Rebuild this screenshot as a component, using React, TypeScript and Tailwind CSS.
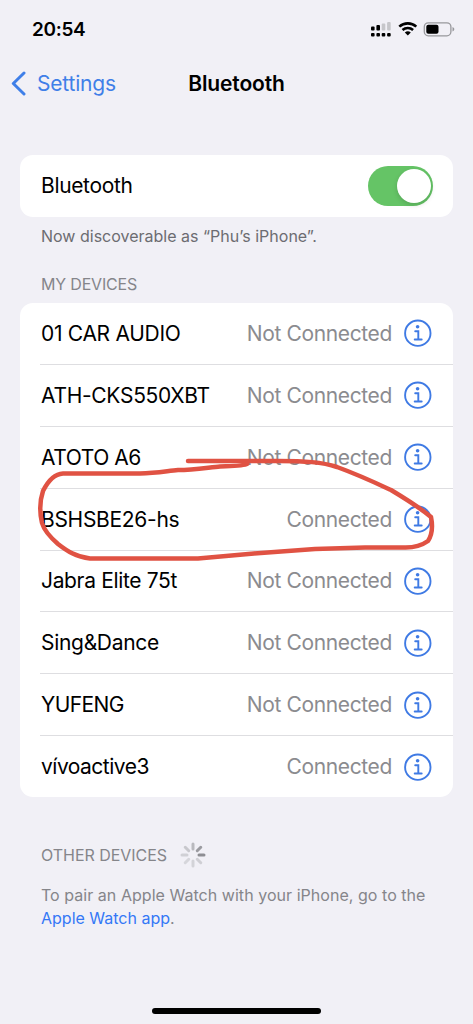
const devices = [
  { name: "01 CAR AUDIO", connected: false, tracking: "tracking-[-0.3px]" },
  { name: "ATH-CKS550XBT", connected: false, tracking: "tracking-[-0.3px]" },
  { name: "ATOTO A6", connected: false, tracking: "tracking-[-0.45px]" },
  { name: "BSHSBE26-hs", connected: true, tracking: "tracking-[-0.3px]" },
  { name: "Jabra Elite 75t", connected: false, tracking: "tracking-[-0.35px]" },
  { name: "Sing&Dance", connected: false, tracking: "tracking-[-0.3px]" },
  { name: "YUFENG", connected: false, tracking: "tracking-[-0.6px]" },
  { name: "vívoactive3", connected: true, tracking: "tracking-[-0.5px]" },
];

const spokes = ["#b9b9be", "#9b9ba0", "#8e8e93", "#cfcfd4", "#d3d3d8", "#d6d6db", "#d0d0d5", "#c8c8cd"];

function StatusIcons() {
  return (
    <svg width="88" height="20" viewBox="0 0 88 20" className="block">
      <g fill="#000">
        <rect x="2" y="6.4" width="3.6" height="4.2" rx="1" />
        <rect x="7.4" y="5" width="3.6" height="5.6" rx="1" />
        <rect x="2" y="13" width="3.6" height="3.6" rx="1" />
        <rect x="7.4" y="13" width="3.6" height="3.6" rx="1" />
        <rect x="12.7" y="13" width="3.6" height="3.6" rx="1" />
        <rect x="18.1" y="13" width="3.6" height="3.6" rx="1" />
      </g>
      <g fill="#c6c6ca">
        <rect x="12.7" y="3.5" width="3.6" height="7.1" rx="1" />
        <rect x="18.1" y="2" width="3.6" height="8.6" rx="1" />
      </g>
      <g fill="none" stroke="#000" strokeWidth="2.6">
        <path d="M30.3 6.6a12.7 12.7 0 0 1 17 0" />
        <path d="M33.5 10a8 8 0 0 1 10.6 0" />
      </g>
      <path d="M35.8 12.6a4.4 4.4 0 0 1 6 0l-3 3z" fill="#000" />
      <rect x="55.3" y="2.8" width="26.6" height="13" rx="4" fill="none" stroke="#98989c" strokeWidth="1.3" />
      <rect x="57.3" y="4.8" width="12.2" height="9" rx="2" fill="#000" />
      <path d="M83.5 7.1c2.4.8 2.4 3.5 0 4.3z" fill="#98989c" />
    </svg>
  );
}

function InfoIcon() {
  return (
    <svg width="28" height="28" viewBox="0 0 28 28" className="ml-3 block shrink-0">
      <circle cx="13.8" cy="14.2" r="12.7" fill="none" stroke="#3f7ae4" strokeWidth="1.9" />
      <circle cx="13.6" cy="7.7" r="1.8" fill="#3f7ae4" />
      <path d="M11.2 12.2h3.1v8M10.7 20.5h7" fill="none" stroke="#3f7ae4" strokeWidth="1.9" strokeLinecap="round" />
    </svg>
  );
}

function Spinner() {
  return (
    <svg width="26" height="26" viewBox="-13 -13 26 26" className="ml-[13px] block">
      {spokes.map((color, i) => (
        <line key={i} x1="0" y1="-6" x2="0" y2="-11" stroke={color} strokeWidth="3" strokeLinecap="round" transform={`rotate(${i * 45})`} />
      ))}
    </svg>
  );
}

export default function App() {
  return (
    <div className="relative flex h-[1024px] w-[473px] flex-col overflow-hidden bg-[#f1f0f6] font-['Inter',sans-serif] text-black">
      <header>
        <div className="flex h-[58px] items-center justify-between pt-px pr-[16px] pl-[32px]">
          <span className="pt-px text-[19px] font-semibold tracking-[-0.35px]">20:54</span>
          <StatusIcons />
        </div>
        <nav className="grid h-[50px] grid-cols-[1fr_auto_1fr] items-center pt-px pl-[11px] text-[21px]">
          <a className="flex items-center text-[#3f7fe8]">
            <svg width="16" height="26" viewBox="0 0 16 26" fill="none" stroke="#3f7fe8" strokeWidth="3" strokeLinecap="round" strokeLinejoin="round">
              <path d="M13 2 2.3 12.5 13 23" />
            </svg>
            <span className="ml-[10px] tracking-[-0.2px]">Settings</span>
          </a>
          <h1 className="mr-[11px] font-semibold tracking-[-0.12px]">Bluetooth</h1>
        </nav>
      </header>

      <main className="px-5 pt-[47px]">
        <section className="flex h-[62px] items-center justify-between rounded-[13px] bg-white pr-5 pl-[21px]">
          <span className="text-[21px] tracking-[-0.35px]">Bluetooth</span>
          <button aria-label="Bluetooth" className="flex h-10 w-[65px] items-center justify-end rounded-full bg-[#65c466] pr-[2.5px]">
            <span className="h-[34px] w-[34px] rounded-full bg-white shadow-[0_2px_5px_rgba(0,0,0,0.15)]" />
          </button>
        </section>
        <p className="mt-[7px] pl-[21px] text-[16px] leading-6 text-[#6c6c71]">Now discoverable as “Phu’s iPhone”.</p>
        <h2 className="mt-6 pl-[21px] text-[16px] leading-6 tracking-[-0.18px] text-[#85858a]">MY DEVICES</h2>

        <section className="mt-[7px] flex h-[494px] flex-col rounded-[13px] bg-white pl-5">
          {devices.map((d, i) => (
            <div key={d.name} className={`flex flex-1 items-center pr-[21px] pl-px text-[21px] ${i ? "border-t border-[#dedee1]" : ""}`}>
              <span className={`pt-[0.5px] ${d.tracking}`}>{d.name}</span>
              <span className="ml-auto pt-[0.5px] tracking-[-0.36px] text-[#8b8b8f]">{d.connected ? "Connected" : "Not Connected"}</span>
              <InfoIcon />
            </div>
          ))}
        </section>

        <div className="mt-[45px] flex h-[26px] items-center pl-[21px] text-[16px] text-[#85858a]">
          <h2 className="tracking-[-0.03px]">OTHER DEVICES</h2>
          <Spinner />
        </div>
        <p className="mt-4 pl-[21px] text-[16px] leading-[23px] whitespace-nowrap text-[#85858a]">
          <span className="tracking-[0.04px]">To pair an Apple Watch with your iPhone, go to the</span>
          <br />
          <a className="text-[#3478f6]">Apple Watch app</a>.
        </p>
      </main>

      <svg width="473" height="120" viewBox="0 450 473 120" className="pointer-events-none absolute top-[450px] left-0" fill="none" stroke="#e05243" strokeWidth="4.5" strokeLinecap="round" strokeLinejoin="round">
        <path d="M188 461H278C305 461 322 462 337 467C359 475 376 483 391 490C406 499 419 507 431 517C433 527 432 535 428 541C421 546 413 548 403 547.5H365L315 549L254 553.5L198 558.5H90C76 557 67 551 58 544C50 537 44 530 42 523C39 510 40 500 43 491C48 481 54 474 63 473.5H140C156 473 167 471 178 470C195 470 211 467 220 466.5C234 466 244 466 247 464" />
      </svg>
      <div className="absolute bottom-[10px] left-[152px] h-[6.5px] w-[169px] rounded-full bg-black" />
    </div>
  );
}
